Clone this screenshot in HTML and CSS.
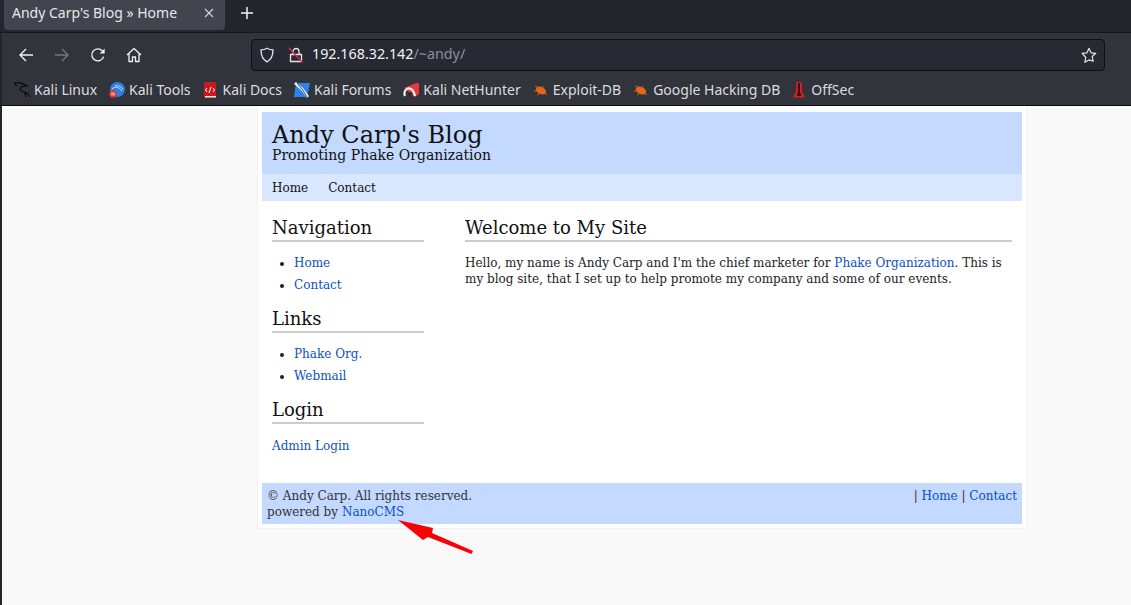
FILE: index.html
```html
<!DOCTYPE html>
<html lang="en">
<head>
<meta charset="utf-8">
<title>Andy Carp's Blog » Home</title>
<link rel="stylesheet" href="styles.css">
</head>
<body>
<div class="chrome">
  <div class="tabbar">
    <div class="tab"><span class="tab-title">Andy Carp's Blog » Home</span>
      <svg class="tab-close" width="10" height="10" viewBox="0 0 10 10"><path d="M1 1l8 8M9 1l-8 8" stroke="#d5d6d9" stroke-width="1.1" fill="none"/></svg>
    </div>
    <svg class="new-tab" width="14" height="14" viewBox="0 0 14 14"><path d="M7 1v12M1 7h12" stroke="#f3f3f4" stroke-width="1.5" fill="none"/></svg>
  </div>
  <div class="toolbar">
    <div class="nav-icons">
      <svg width="16" height="16" viewBox="0 0 16 16"><path d="M15 8H2M8 2L2 8l6 6" stroke="#f1f1f3" stroke-width="1.4" fill="none"/></svg>
      <svg width="16" height="16" viewBox="0 0 16 16"><path d="M1 8h13M8 2l6 6-6 6" stroke="#75767b" stroke-width="1.4" fill="none"/></svg>
      <svg width="16" height="16" viewBox="0 0 16 16"><path d="M13.6 9.6A6 6 0 1 1 12.4 3.9L14 5.5" stroke="#f1f1f3" stroke-width="1.4" fill="none"/><path d="M14.6 1.500v5h-5z" fill="#f1f1f3"/></svg>
      <svg width="16" height="16" viewBox="0 0 16 16"><path d="M1 8l7-6.500L15 8M3 6.500V14.500h3.500V10h3v4.500H13V6.500" stroke="#f1f1f3" stroke-width="1.300" fill="none" stroke-linejoin="round"/></svg>
    </div>
    <div class="urlbar">
      <svg class="url-shield" width="16" height="16" viewBox="0 0 16 16"><path d="M8 1.200c2 1.200 4 1.600 6 1.600 0 6-1.600 9.800-6 12-4.400-2.200-6-6-6-12 2 0 4-.4 6-1.600z" stroke="#e6e6e8" stroke-width="1.300" fill="none"/></svg>
      <svg class="url-lock" width="16" height="16" viewBox="0 0 16 16"><path d="M5 7V4.500a3 3 0 0 1 6 0V7M2.500 7.500h11v7h-11z" stroke="#e6e6e8" stroke-width="1.300" fill="none"/><path d="M1 1l13 14" stroke="#e0274f" stroke-width="1.300"/></svg>
      <span class="url-text"><span class="url-host">192.168.32.142</span>/~andy/</span>
      <svg class="url-star" width="16" height="16" viewBox="0 0 16 16"><path d="M8 1.300l2 4.500 4.800.5-3.600 3.200 1 4.800L8 12.900l-4.200 2.400 1-4.800L1.200 6.300 6 5.800z" stroke="#e6e6e8" stroke-width="1.200" fill="none" stroke-linejoin="round"/></svg>
    </div>
  </div>
  <div class="bookmarks">
    <span class="bm"><svg width="16" height="16" viewBox="0 0 16 16"><path d="M0 1C3 .5 9 1 13 4 9 3.500 6 5 6 7.500 6 10 12 9.500 14 12l2 3M0 1l3 3M11 11l1 4" stroke="#0b0b0d" stroke-width="1.200" fill="none"/></svg>Kali Linux</span>
    <span class="bm"><svg width="16" height="16" viewBox="0 0 16 16"><circle cx="8.500" cy="7.500" r="7.500" fill="#2f7fe0"/><path d="M3 7c3-3 7-2 10 2M6 4c2-1 5 0 8 3" stroke="#cfe3fa" fill="none"/><circle cx="4" cy="12" r="3.700" fill="#e8312f"/><path d="M3 10.500v3M5 10.500v3" stroke="#fff"/></svg>Kali Tools</span>
    <span class="bm"><svg width="16" height="16" viewBox="0 0 16 16"><rect x="1" y="0" width="12" height="16" rx="1" fill="#c8191c"/><rect x="2" y="14" width="11" height="1.500" fill="#e8e8e8"/><path d="M4 6l-1.500 2L4 10M10 6l1.500 2L10 10M8 5L6 11" stroke="#fff" fill="none"/></svg>Kali Docs</span>
    <span class="bm"><svg width="16" height="16" viewBox="0 0 16 16"><path d="M2 1h14l-3 14H0z" fill="#2a86ee"/><path d="M1 1l7 6 6 8" stroke="#f2f2f2" stroke-width="2.800" fill="none"/><path d="M3 1l5 6 5 8" stroke="#222" stroke-width=".8" fill="none"/></svg>Kali Forums</span>
    <span class="bm"><svg width="16" height="16" viewBox="0 0 16 16"><path d="M1 6L13 1h3v11l-4 3z" fill="#e8383a"/><path d="M2 14c-2-5 2-9 6-7 2 1 3 3 4 7" stroke="#f2f2f2" stroke-width="2.200" fill="none"/><path d="M6 14c0-3 2-4 3-2" stroke="#222" stroke-width="1.300" fill="none"/></svg>Kali NetHunter</span>
    <span class="bm"><svg width="16" height="16" viewBox="0 0 16 16"><ellipse cx="8" cy="8.500" rx="5.500" ry="3.500" transform="rotate(25 8 8.500)" fill="#e4661e"/><path d="M2 4l4 2M1 9h4M4 13l3-2M10 4l-1 2M14 13l-3-2" stroke="#d8601e"/></svg>Exploit-DB</span>
    <span class="bm"><svg width="16" height="16" viewBox="0 0 16 16"><ellipse cx="8" cy="8.500" rx="5.500" ry="3.500" transform="rotate(25 8 8.500)" fill="#e4661e"/><path d="M2 4l4 2M1 9h4M4 13l3-2M10 4l-1 2M14 13l-3-2" stroke="#d8601e"/></svg>Google Hacking DB</span>
    <span class="bm"><svg width="15" height="16" viewBox="0 0 15 16"><path d="M4.500 0h5l.5 9 3 6.500H1L4 9z" fill="#d81f26"/><path d="M6 1h2v9l1.500 4h-5L6 10z" fill="#3a0d10"/></svg>OffSec</span>
  </div>
</div>
<main class="viewport">
  <div class="site">
    <header class="site-header">
      <h1 class="site-title">Andy Carp's Blog</h1>
      <p class="site-sub">Promoting Phake Organization</p>
    </header>
    <nav class="site-nav"><a>Home</a><a>Contact</a></nav>
    <div class="site-body">
      <aside class="sidebar">
        <h2>Navigation</h2>
        <ul><li><a>Home</a></li><li><a>Contact</a></li></ul>
        <h2>Links</h2>
        <ul><li><a>Phake Org.</a></li><li><a>Webmail</a></li></ul>
        <h2>Login</h2>
        <p class="login"><a>Admin Login</a></p>
      </aside>
      <section class="content">
        <h2>Welcome to My Site</h2>
        <p>Hello, my name is Andy Carp and I'm the chief marketer for <a>Phake Organization</a>. This is my blog site, that I set up to help promote my company and some of our events.</p>
      </section>
    </div>
    <footer class="site-footer">
      <div>© Andy Carp. All rights reserved.<br>powered by <a>NanoCMS</a></div>
      <div>| <a>Home</a> | <a>Contact</a></div>
    </footer>
  </div>
  <svg class="arrow" width="80" height="40" viewBox="0 0 80 40"><path d="M1 1L36 9 35 14 76 32 74.500 35 31 18 26 21z" fill="#fb0007"/></svg>
</main>
</body>
</html>
```

FILE: styles.css
```css
* { box-sizing: border-box; }
html, body { margin: 0; height: 100%; overflow: hidden; }
body { width: 1131px; height: 605px; display: flex; flex-direction: column; background: #f9f9fa; }

.chrome { height: 106px; flex: none; background: #24262e; font-family: "Noto Sans", "Open Sans", sans-serif; font-size: 14px; color: #e6e6e8; border-bottom: 1px solid #0c0c0d; }
.tabbar { height: 33px; display: flex; align-items: flex-start; padding-left: 4px; border-bottom: 1px solid #17181c; }
.tab { width: 221px; height: 30px; background: #42454d; border-radius: 0 0 4px 4px; display: flex; align-items: center; justify-content: space-between; padding: 0 11px 4px 8px; color: #e6e7ea; }
.tab-title { font-size: 14px; line-height: 26px; }
.new-tab { margin-left: 15px; margin-top: 6px; }

.toolbar { height: 42px; padding: 5px 26px 4px 16px; display: flex; align-items: center; background: #32343c; margin-left: 2px; }
.nav-icons { display: flex; gap: 20px; width: 233px; }
.nav-icons svg { flex: none; }
.urlbar { width: 854px; height: 32px; background: #272933; border: 1px solid #0e0f13; border-radius: 4px; display: flex; align-items: center; padding: 0 7px 0 7px; }
.url-lock { margin-left: 13px; }
.url-text { margin-left: 8px; font-size: 14.300px; color: #8f9096; flex: 1; line-height: 28px; padding-bottom: 1px; }
.url-host { color: #f4f4f5; }

.bookmarks { height: 30px; background: #32343c; display: flex; align-items: center; padding: 0 0 1px 12px; gap: 12px; margin-left: 2px; font-size: 14px; color: #dcdcde; }
.bm { display: flex; align-items: center; gap: 4px; white-space: nowrap; }
.bm svg { flex: none; }

.viewport { position: relative; flex: 1; background: #f9f9f9; display: flex; justify-content: flex-start; border-left: 2px solid #24262e; padding-left: 255px; font-family: "DejaVu Serif", serif; }
.site { width: 770px; height: 423px; background: #fff; border: 1px solid #f1f1f1; border-top: none; padding: 6px 4px 4px 4px; display: flex; flex-direction: column; color: #222; font-size: 12px; }
.site a { color: #0b4fc4; text-decoration: none; }

.site-header { height: 62px; background: #c3d9ff; padding: 9px 10px 0; color: #111; }
.site-title { margin: 0; font-size: 24px; font-weight: normal; line-height: 28px; }
.site-sub { margin: 0; font-size: 14px; line-height: 12px; }
.site-nav { height: 27px; background: #d9e6ff; padding: 0 10px; display: flex; align-items: center; gap: 20px; }
.site-nav a { color: #111; }

.site-body { flex: 1; display: flex; padding: 0 10px; }
.sidebar { width: 152px; margin-right: 41px; flex: none; }
.content { flex: 1; }
.site-body h2 { margin: 0; font-size: 18px; font-weight: normal; line-height: 28px; height: 28px; color: #111; border-bottom: 2px solid #ccc; }
.sidebar h2:first-child, .content h2 { margin-top: 13px; }
.sidebar ul { margin: 0; padding: 11px 0 0 22px; list-style: disc; height: 63px; }
.sidebar li { line-height: 21.700px; }
.sidebar li::marker { color: #1a1a4a; }
.login { margin: 12px 0 0; line-height: 21px; }
.content p { margin: 13px 0 0; line-height: 16px; }

.site-footer { height: 41px; background: #c3d9ff; display: flex; justify-content: space-between; padding: 5px 5px 0; line-height: 16px; color: #333; }

.arrow { position: absolute; left: 395px; top: 413px; }
```
